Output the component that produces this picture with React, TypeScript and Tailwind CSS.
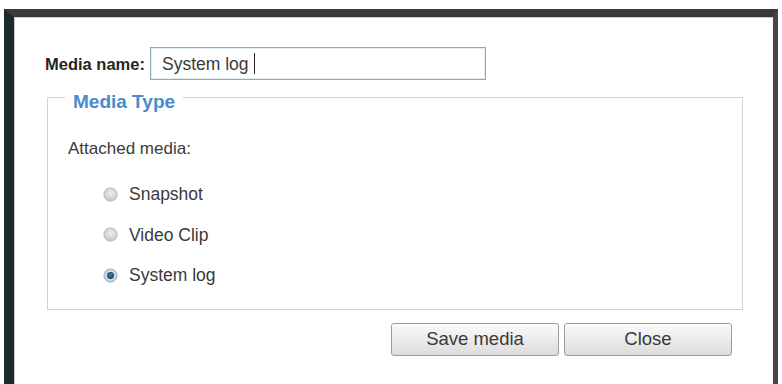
import React from "react";

function Radio({ checked }: { checked?: boolean }) {
  return (
    <svg width="15" height="15" viewBox="0 0 15 15" className="shrink-0">
      <defs>
        <radialGradient id="rg-off" cx="50%" cy="40%" r="60%">
          <stop offset="0%" stopColor="#efefef" />
          <stop offset="100%" stopColor="#c6c6c6" />
        </radialGradient>
        <radialGradient id="rg-on" cx="50%" cy="45%" r="55%">
          <stop offset="0%" stopColor="#e9f2f8" />
          <stop offset="100%" stopColor="#b3cada" />
        </radialGradient>
        <radialGradient id="rg-dot" cx="45%" cy="40%" r="60%">
          <stop offset="0%" stopColor="#3f7ea6" />
          <stop offset="100%" stopColor="#173d58" />
        </radialGradient>
      </defs>
      <circle
        cx="7.5"
        cy="7.5"
        r="6.6"
        fill={checked ? "url(#rg-on)" : "url(#rg-off)"}
        stroke={checked ? "#9ab4c6" : "#b8b8b8"}
        strokeWidth="1"
      />
      {checked && <circle cx="7.5" cy="7.5" r="3.4" fill="url(#rg-dot)" />}
    </svg>
  );
}

function RadioRow({ label, checked }: { label: string; checked?: boolean }) {
  return (
    <div className="flex items-center h-[40.5px] gap-[11px]">
      <Radio checked={checked} />
      <span className="text-[17.5px] leading-[20px] text-[#3a3a3a]">{label}</span>
    </div>
  );
}

function Button({ children }: { children: React.ReactNode }) {
  return (
    <button className="w-[168px] h-[33px] rounded-[3px] border border-[#9c9c9c] bg-gradient-to-b from-[#fbfbfb] to-[#dcdcdc] text-[18.5px] leading-[20px] text-[#3a3a3a] shadow-[inset_0_1px_0_#ffffff]">
      {children}
    </button>
  );
}

export default function App() {
  return (
    <div
      className="w-[782px] h-[384px] bg-white pt-[9px] pl-[4px] overflow-hidden"
      style={{ fontFamily: '"Liberation Sans", Arial, sans-serif' }}
    >
      <div className="w-[774px] h-[375px] border-t-[8px] border-l-[10px] border-r-[5px] border-b-0 border-t-[#3a3a3a] border-l-[#1f2a2e] border-r-[#474747]">
        <div className="h-full border-t border-l border-[#c9c9c9]">
          <div className="flex items-center pt-[29px] pl-[30px]">
            <span className="text-[16.5px] font-bold leading-[20px] text-[#262626]">
              Media name:
            </span>
            <div className="ml-[5px] w-[336px] h-[33px] border border-[#86adb4] shadow-[inset_0_0_0_1px_#e3eef0] flex items-center pl-[11px]">
              <span className="text-[17.5px] leading-[20px] text-[#3a3a3a]">System log</span>
              <span className="ml-[5px] w-[1.5px] h-[21px] bg-[#222]" />
            </div>
          </div>

          <div className="ml-[32px] w-[696px]">
            <fieldset className="mt-[3px] border border-[#d2d2d2] pb-[13px]">
              <legend className="ml-[17px] px-[8px] pt-[9px] text-[19px] font-bold leading-[20px] text-[#4a8bcb]">
                Media Type
              </legend>
              <div className="pl-[20px] pt-[27px] text-[17px] leading-[20px] text-[#3a3a3a]">
                Attached media:
              </div>
              <div className="pl-[55px] pt-[15px]">
                <RadioRow label="Snapshot" />
                <RadioRow label="Video Clip" />
                <RadioRow label="System log" checked />
              </div>
            </fieldset>
            <div className="flex justify-end gap-[5px] pr-[11px] mt-[13px]">
              <Button>Save media</Button>
              <Button>Close</Button>
            </div>
          </div>
        </div>
      </div>
    </div>
  );
}
